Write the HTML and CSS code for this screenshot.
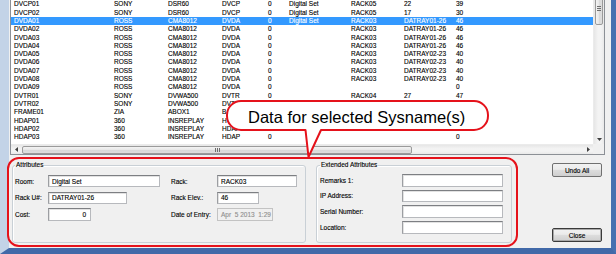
FILE: index.html
```html
<!DOCTYPE html>
<html>
<head>
<meta charset="utf-8">
<link rel="stylesheet" href="styles.css">
</head>
<body>
<div class="screen">
  <div class="window">
    <div class="client">
      <div class="list">
        <div class="rows">
          <div class="row"><span>DVCP01</span><span>SONY</span><span>DSR60</span><span>DVCP</span><span>0</span><span>Digital Set</span><span>RACK05</span><span>22</span><span>39</span></div>
          <div class="row"><span>DVCP02</span><span>SONY</span><span>DSR60</span><span>DVCP</span><span>0</span><span>Digital Set</span><span>RACK05</span><span>17</span><span>30</span></div>
          <div class="row selected"><span>DVDA01</span><span>ROSS</span><span>CMA8012</span><span>DVDA</span><span>0</span><span>Digital Set</span><span>RACK03</span><span>DATRAY01-26</span><span>46</span></div>
          <div class="row"><span>DVDA02</span><span>ROSS</span><span>CMA8012</span><span>DVDA</span><span>0</span><span></span><span>RACK03</span><span>DATRAY01-26</span><span>46</span></div>
          <div class="row"><span>DVDA03</span><span>ROSS</span><span>CMA8012</span><span>DVDA</span><span>0</span><span></span><span>RACK03</span><span>DATRAY01-26</span><span>46</span></div>
          <div class="row"><span>DVDA04</span><span>ROSS</span><span>CMA8012</span><span>DVDA</span><span>0</span><span></span><span>RACK03</span><span>DATRAY01-26</span><span>46</span></div>
          <div class="row"><span>DVDA05</span><span>ROSS</span><span>CMA8012</span><span>DVDA</span><span>0</span><span></span><span>RACK03</span><span>DATRAY02-23</span><span>40</span></div>
          <div class="row"><span>DVDA06</span><span>ROSS</span><span>CMA8012</span><span>DVDA</span><span>0</span><span></span><span>RACK03</span><span>DATRAY02-23</span><span>40</span></div>
          <div class="row"><span>DVDA07</span><span>ROSS</span><span>CMA8012</span><span>DVDA</span><span>0</span><span></span><span>RACK03</span><span>DATRAY02-23</span><span>40</span></div>
          <div class="row"><span>DVDA08</span><span>ROSS</span><span>CMA8012</span><span>DVDA</span><span>0</span><span></span><span>RACK03</span><span>DATRAY02-23</span><span>40</span></div>
          <div class="row"><span>DVDA09</span><span>ROSS</span><span>CMA8012</span><span>DVDA</span><span>0</span><span></span><span></span><span></span><span>0</span></div>
          <div class="row"><span>DVTR01</span><span>SONY</span><span>DVWA500</span><span>DVTR</span><span>0</span><span></span><span>RACK04</span><span>27</span><span>47</span></div>
          <div class="row"><span>DVTR02</span><span>SONY</span><span>DVWA500</span><span>DVTR</span><span></span><span></span><span></span><span></span><span></span></div>
          <div class="row"><span>FRAME01</span><span>ZIA</span><span>ABOX1</span><span>B</span><span></span><span></span><span></span><span></span><span></span></div>
          <div class="row"><span>HDAP01</span><span>360</span><span>INSREPLAY</span><span>H</span><span></span><span></span><span></span><span></span><span></span></div>
          <div class="row"><span>HDAP02</span><span>360</span><span>INSREPLAY</span><span>HDAP</span><span></span><span></span><span></span><span></span><span></span></div>
          <div class="row"><span>HDAP03</span><span>360</span><span>INSREPLAY</span><span>HDAP</span><span>0</span><span></span><span></span><span></span><span>0</span></div>
        </div>
        <div class="vscroll">
          <div class="vthumb"><span class="vgrip"></span></div>
          <div class="varrow"><svg width="5" height="3" viewBox="0 0 5 3"><path d="M0 0H5L2.5 3Z" fill="#404040"/></svg></div>
        </div>
        <div class="hscroll">
          <div class="harrow"><svg width="3" height="5" viewBox="0 0 3 5"><path d="M3 0V5L0 2.5Z" fill="#404040"/></svg></div>
          <div class="hthumb"><span class="hgrip"></span></div>
          <div class="harrow right"><svg width="3" height="5" viewBox="0 0 3 5"><path d="M0 0V5L3 2.5Z" fill="#404040"/></svg></div>
        </div>
        <div class="corner"></div>
      </div>
      <div class="bottom">
        <fieldset class="group attrs">
          <legend>Attributes</legend>
          <div class="attr-grid">
            <span class="lbl">Room:</span>
            <div class="field w112">Digital Set</div>
            <span class="lbl">Rack:</span>
            <div class="field w80">RACK03</div>
            <span class="lbl">Rack U#:</span>
            <div class="field w79">DATRAY01-26</div>
            <span class="lbl">Rack Elev.:</span>
            <div class="field w42">46</div>
            <span class="lbl">Cost:</span>
            <div class="field w43 num">0</div>
            <span class="lbl">Date of Entry:</span>
            <div class="field w56 disabled">Apr  5 2013  1:29</div>
          </div>
        </fieldset>
        <fieldset class="group ext">
          <legend>Extended Attributes</legend>
          <div class="ext-grid">
            <span class="lbl">Remarks 1:</span>
            <div class="field"></div>
            <span class="lbl">IP Address:</span>
            <div class="field"></div>
            <span class="lbl">Serial Number:</span>
            <div class="field"></div>
            <span class="lbl">Location:</span>
            <div class="field"></div>
          </div>
        </fieldset>
        <div class="buttons">
          <button class="btn">Undo All</button>
          <button class="btn default">Close</button>
        </div>
      </div>
    </div>
  </div>
  <svg class="annot" width="616" height="254" viewBox="0 0 616 254">
    <rect x="8" y="158" width="509" height="88" rx="11" ry="11" fill="none" stroke="#e5121b" stroke-width="2"/>
    <path d="M241 101 H474 A14 14 0 0 1 488 115 V116 A14 14 0 0 1 474 130 H321 L308.5 157 L305.5 130 H241 A14 14 0 0 1 227 116 V115 A14 14 0 0 1 241 101 Z" fill="#ffffff" stroke="#e5121b" stroke-width="2" stroke-linejoin="round"/>
    <text x="248" y="123" class="callout">Data for selected Sysname(s)</text>
  </svg>
</div>
</body>
</html>
```

FILE: styles.css
```css
html, body {
  margin: 0;
  padding: 0;
  background: #ffffff;
}

body {
  font-family: "Liberation Sans", Arial, sans-serif;
  font-size: 6.5px;
  color: #000000;
}

.screen {
  position: relative;
  width: 616px;
  height: 254px;
  overflow: hidden;
}

.window {
  width: 616px;
  height: 254px;
  box-sizing: border-box;
  background: #c5d5e9;
  border-left: 9px solid #c3d3e7;
  border-right: 5px solid #4670b0;
  border-bottom: 6px solid #4169a8;
  -webkit-text-stroke: 0.12px currentColor;
}

.client {
  height: 248px;
  background: #f0f0f0;
  display: flex;
  flex-direction: column;
}

/* ---------- list view ---------- */
.list {
  margin-left: 1px;
  width: 595px;
  box-sizing: border-box;
  border: 1px solid #8c9096;
  border-top: none;
  background: #ffffff;
  display: grid;
  grid-template-columns: 582px 11px;
  grid-template-rows: 144px 10px;
}

.rows {
  overflow: hidden;
  padding-top: 0.2px;
}

.row {
  display: grid;
  grid-template-columns: 100px 54px 54px 46px 21px 62px 53px 52px 1fr;
  padding-left: 3px;
  height: 8.33px;
  line-height: 8.33px;
  white-space: nowrap;
  color: #000000;
}

.row.selected {
  background: #3399ff;
  color: #ffffff;
}

.vscroll {
  display: flex;
  flex-direction: column;
  align-items: center;
  background: linear-gradient(90deg, #e6e6e6, #f3f3f3 40%, #f3f3f3 70%, #e9e9e9);
  border-left: 1px solid #ebebeb;
}

.vthumb {
  margin-top: -8px;
  width: 8px;
  height: 33px;
  box-sizing: border-box;
  border: 1px solid #9a9a9a;
  border-radius: 2px;
  background: linear-gradient(90deg, #f3f3f3, #e6e6e6 50%, #d9d9d9 50%, #dedede);
  display: flex;
  align-items: center;
  justify-content: center;
}

.vgrip {
  width: 4px;
  height: 5px;
  background: repeating-linear-gradient(180deg, #6e6e6e 0 1px, transparent 1px 2px);
}

.varrow {
  margin-top: auto;
  height: 10px;
  display: flex;
  align-items: center;
  justify-content: center;
}

.hscroll {
  display: flex;
  align-items: center;
  background: linear-gradient(180deg, #e6e6e6, #f3f3f3 40%, #f3f3f3 70%, #e9e9e9);
  border-top: 1px solid #ebebeb;
}

.harrow {
  width: 10px;
  height: 9px;
  display: flex;
  align-items: center;
  justify-content: center;
}

.harrow.right {
  margin-left: auto;
}

.hthumb {
  margin-left: 1px;
  width: 390px;
  height: 8px;
  box-sizing: border-box;
  border: 1px solid #9a9a9a;
  border-radius: 2px;
  background: linear-gradient(180deg, #f3f3f3, #e6e6e6 50%, #d9d9d9 50%, #dedede);
  display: flex;
  align-items: center;
  justify-content: center;
}

.hgrip {
  width: 5px;
  height: 4px;
  background: repeating-linear-gradient(90deg, #6e6e6e 0 1px, transparent 1px 2px);
}

.corner {
  background: #f0f0f0;
}

/* ---------- bottom area ---------- */
.bottom {
  display: flex;
  align-items: flex-start;
  padding-left: 3px;
}

.group {
  margin: 6px 0 0 0;
  padding: 0 8px 0 2px;
  box-sizing: border-box;
  height: 82px;
  min-width: 0;
  border: 1px solid #c9d0d6;
  border-radius: 3px;
  box-shadow: inset 1px 1px 0 #ffffff;
}

.group legend {
  padding: 0 1px;
  margin-left: 0;
  line-height: 8px;
  font-size: 6.5px;
}

.attrs {
  width: 294px;
}

.ext {
  width: 196px;
  margin-left: 10px;
  padding-left: 3px;
}

.attr-grid {
  margin-top: 6px;
  display: grid;
  grid-template-columns: 33px 123px 46px 1fr;
  grid-template-rows: 12px 12px 13px;
  row-gap: 4.5px;
  align-items: center;
}

.ext-grid {
  margin-top: 5px;
  display: grid;
  grid-template-columns: 82px 101px;
  grid-template-rows: repeat(4, 12.5px);
  row-gap: 3.2px;
  align-items: center;
}

.lbl {
  white-space: nowrap;
}

.field {
  height: 100%;
  box-sizing: border-box;
  background: #ffffff;
  border: 1px solid #b7b9bd;
  border-top-color: #7d7f83;
  border-left-color: #9c9ea2;
  box-shadow: inset 1px 1px 0 #e2e2e2;
  padding: 0 3px;
  display: flex;
  align-items: center;
  white-space: pre;
}

.w112 { width: 112px; }
.w80 { width: 80px; }
.w79 { width: 79px; }
.w42 { width: 42px; }
.w43 { width: 43px; }
.w56 { width: 56px; }

.field.num {
  justify-content: flex-end;
  padding-right: 4px;
}

.field.disabled {
  background: #f0f0f0;
  border-color: #c3c3c3;
  box-shadow: none;
  color: #8f8f8f;
}

.buttons {
  margin-left: 40px;
  margin-top: 8px;
  height: 79px;
  display: flex;
  flex-direction: column;
  justify-content: space-between;
}

.btn {
  width: 50px;
  height: 14px;
  padding: 0;
  margin: 0;
  font-family: "Liberation Sans", Arial, sans-serif;
  font-size: 6.5px;
  color: #000000;
  -webkit-text-stroke: 0.12px currentColor;
  border: 1px solid #707070;
  border-radius: 2px;
  background: linear-gradient(180deg, #f2f2f2, #ebebeb 45%, #dddddd 50%, #cfcfcf);
}

.btn.default {
  border-color: #3a3a3a;
  box-shadow: inset 0 0 0 1px #a8a8a8;
}

/* ---------- annotation overlay ---------- */
.annot {
  position: absolute;
  left: 0;
  top: 0;
  pointer-events: none;
}

.callout {
  font-family: "Liberation Sans", Arial, sans-serif;
  font-size: 16.5px;
  fill: #000000;
}
```
